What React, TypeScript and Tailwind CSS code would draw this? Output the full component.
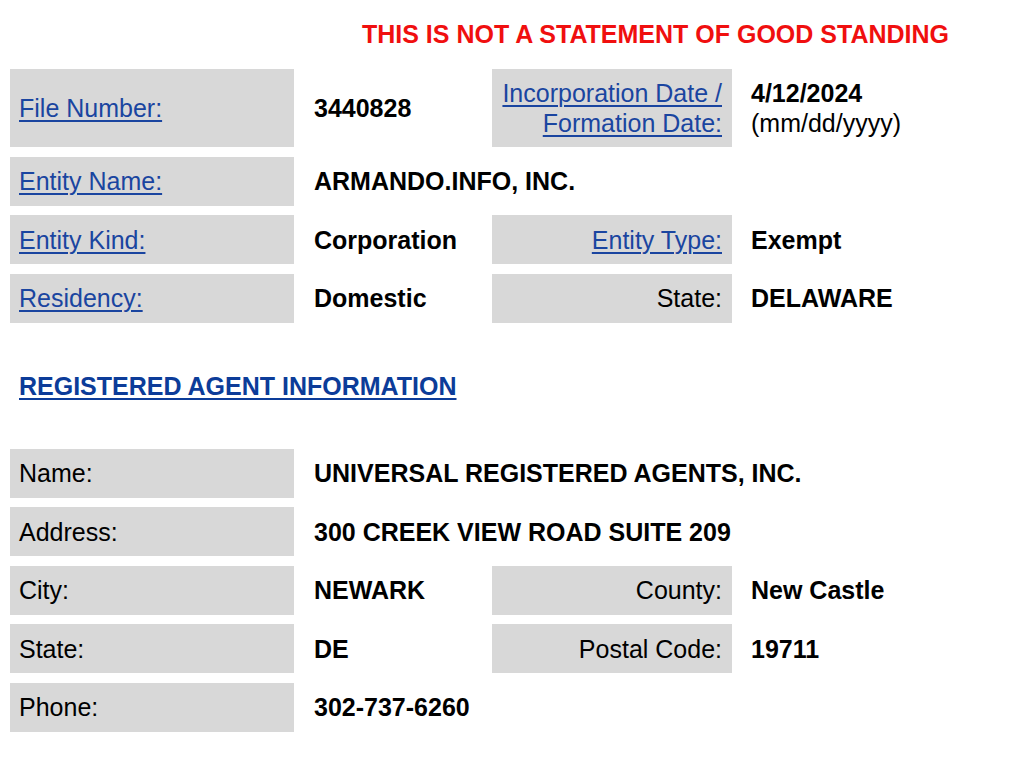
import type { ReactNode } from 'react';

type Row = {
  label: ReactNode;
  value: ReactNode;
  label2?: ReactNode;
  value2?: ReactNode;
  tall?: boolean;
};

const linkCls = 'text-[#1a45a0] underline decoration-[1.5px] underline-offset-[3px]';

function Link({ children }: { children: ReactNode }) {
  return (
    <a href="#" className={linkCls}>
      {children}
    </a>
  );
}

function InfoRow({ label, value, label2, value2, tall }: Row) {
  return (
    <div className={`flex ${tall ? 'h-[78px]' : 'h-[49px]'}`}>
      <div className="w-[284px] shrink-0 bg-[#d8d8d8] pl-[9px] flex items-center">{label}</div>
      <div className="w-[198px] shrink-0 pl-[20px] flex items-center font-bold">{value}</div>
      {label2 !== undefined && (
        <div className="w-[240px] shrink-0 bg-[#d8d8d8] pr-[10px] flex items-center justify-end text-right">
          {label2}
        </div>
      )}
      {value2 !== undefined && <div className="pl-[19px] flex items-center">{value2}</div>}
    </div>
  );
}

export default function App() {
  const entityRows: Row[] = [
    {
      tall: true,
      label: <Link>File Number:</Link>,
      value: '3440828',
      label2: (
        <div className="leading-[30px] whitespace-nowrap">
          <Link>Incorporation Date /</Link>
          <br />
          <Link>Formation Date:</Link>
        </div>
      ),
      value2: (
        <div className="leading-[30px]">
          <div className="font-bold">4/12/2024</div>
          <div>(mm/dd/yyyy)</div>
        </div>
      ),
    },
    {
      label: <Link>Entity Name:</Link>,
      value: <span className="whitespace-nowrap">ARMANDO.INFO, INC.</span>,
    },
    {
      label: <Link>Entity Kind:</Link>,
      value: 'Corporation',
      label2: <Link>Entity Type:</Link>,
      value2: <span className="font-bold">Exempt</span>,
    },
    {
      label: <Link>Residency:</Link>,
      value: 'Domestic',
      label2: 'State:',
      value2: <span className="font-bold">DELAWARE</span>,
    },
  ];

  const agentRows: Row[] = [
    { label: 'Name:', value: <span className="whitespace-nowrap">UNIVERSAL REGISTERED AGENTS, INC.</span> },
    { label: 'Address:', value: <span className="whitespace-nowrap">300 CREEK VIEW ROAD SUITE 209</span> },
    { label: 'City:', value: 'NEWARK', label2: 'County:', value2: <span className="font-bold">New Castle</span> },
    { label: 'State:', value: 'DE', label2: 'Postal Code:', value2: <span className="font-bold">19711</span> },
    { label: 'Phone:', value: '302-737-6260' },
  ];

  return (
    <div className="min-h-screen bg-white text-black font-['Liberation_Sans',Arial,sans-serif] text-[25px] leading-[28px] pl-[10px] pt-[20px]">
      <div className="flex justify-end pr-[75px] font-bold text-[#f00f0f] mb-[21px]">
        THIS IS NOT A STATEMENT OF GOOD STANDING
      </div>

      <div className="flex flex-col gap-[9.5px]">
        {entityRows.map((r, i) => (
          <InfoRow key={i} {...r} />
        ))}
      </div>

      <div className="mt-[49px] mb-[49px] pl-[9px]">
        <a href="#" className="font-bold text-[#0c3c99] underline decoration-2 underline-offset-[3px]">
          REGISTERED AGENT INFORMATION
        </a>
      </div>

      <div className="flex flex-col gap-[9.5px]">
        {agentRows.map((r, i) => (
          <InfoRow key={i} {...r} />
        ))}
      </div>
    </div>
  );
}
